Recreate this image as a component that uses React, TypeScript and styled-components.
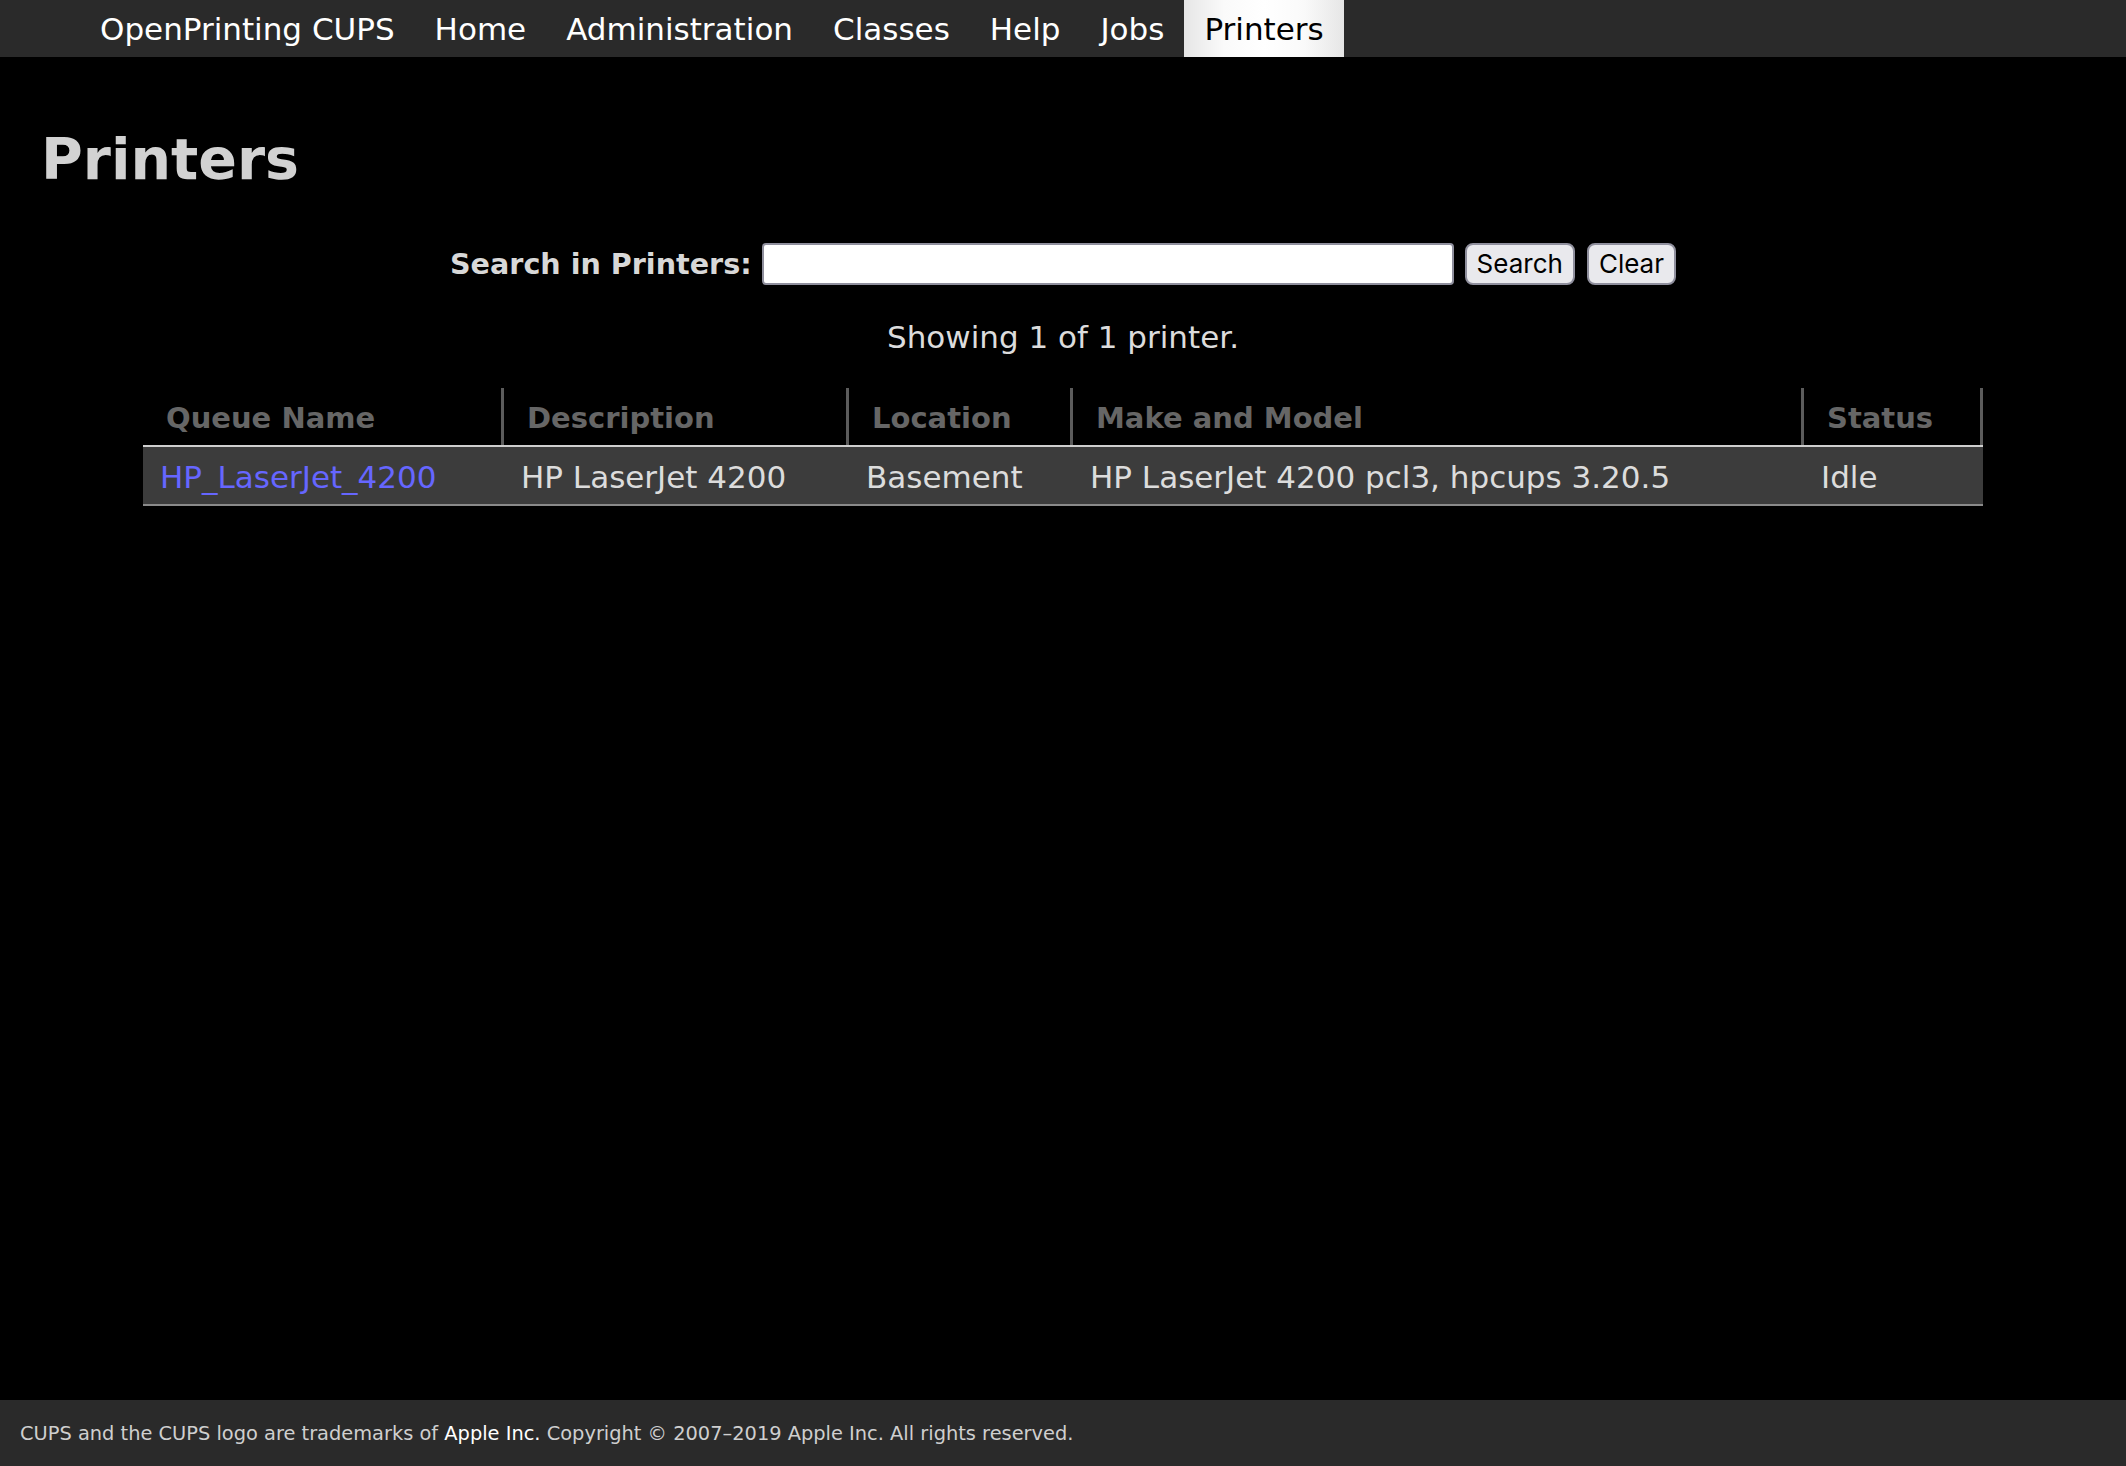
import React from "react";
import styled, { createGlobalStyle } from "styled-components";

const GlobalStyle = createGlobalStyle`
  html, body {
    margin: 0;
    padding: 0;
    background: #000;
  }
  body {
    font-family: "DejaVu Sans", Verdana, sans-serif;
    color: #dcdcdc;
  }
  * { box-sizing: border-box; }
`;

const Page = styled.div`
  min-height: 100vh;
  display: flex;
  flex-direction: column;
  background: #000;
`;

const NavBar = styled.nav`
  height: 57px;
  background: #2a2a2a;
  display: flex;
  padding-left: 80px;
`;

const NavItem = styled.a<{ $active?: boolean }>`
  display: block;
  height: 57px;
  padding: 2px 20px 0;
  line-height: 55px;
  font-size: 31px;
  text-decoration: none;
  white-space: nowrap;
  color: ${(p) => (p.$active ? "#000" : "#fff")};
  background: ${(p) =>
    p.$active
      ? "linear-gradient(to right, #e6e6e6 0%, #fafafa 25%, #fff 50%, #fafafa 75%, #e6e6e6 100%)"
      : "transparent"};
`;

const Main = styled.main`
  flex: 1;
  padding: 0 41px;
  display: flex;
  flex-direction: column;
`;

const Title = styled.h1`
  margin: 69px 0 0;
  font-size: 57px;
  line-height: 67px;
  font-weight: bold;
  color: #d2d2d2;
`;

const SearchForm = styled.form`
  margin-top: 50px;
  display: flex;
  justify-content: center;
  align-items: center;
  height: 42px;
`;

const SearchLabel = styled.label`
  font-size: 28.6px;
  font-weight: bold;
  color: #d8d8d8;
  white-space: nowrap;
`;

const SearchInput = styled.input`
  width: 692px;
  height: 42px;
  margin-left: 10px;
  border: 2px solid #8f8f9d;
  border-radius: 4px;
  background: #fff;
  font-size: 26px;
  padding: 0 6px;
`;

const FormButton = styled.button<{ $gap: number }>`
  height: 42px;
  margin-left: ${(p) => p.$gap}px;
  padding: 0 10px;
  border: 2px solid #8f8f9d;
  border-radius: 8px;
  background: #e9e9ed;
  color: #000;
  font-family: Inter, "Liberation Sans", sans-serif;
  font-size: 26px;
  line-height: 1;
`;

const Summary = styled.p`
  margin: 34px 0 0;
  text-align: center;
  font-size: 31px;
  line-height: 36px;
  color: #dcdcdc;
`;

const Table = styled.div`
  margin: 33px auto 0;
  width: 1840px;
`;

const columns = "361px 345px 224px 731px 179px";

const HeaderRow = styled.div`
  display: grid;
  grid-template-columns: ${columns};
  border-bottom: 2px solid #cfcfcf;
`;

const HeaderCell = styled.div`
  height: 57px;
  padding: 13px 0 0 23px;
  border-right: 3px solid #5c5c5c;
  font-size: 29px;
  line-height: 34px;
  font-weight: bold;
  color: #666;
  white-space: nowrap;
`;

const DataRow = styled.div`
  display: grid;
  grid-template-columns: ${columns};
  background: #3c3c3c;
  border-bottom: 2px solid #8a8a8a;
`;

const DataCell = styled.div`
  height: 57px;
  padding: 12px 0 0 17px;
  font-size: 31px;
  line-height: 36px;
  color: #dcdcdc;
  white-space: nowrap;
`;

const QueueLink = styled.a`
  color: #6666ff;
  text-decoration: none;
`;

const Footer = styled.footer`
  height: 66px;
  background: #2a2a2a;
  padding: 22px 0 0 20px;
  font-size: 19.4px;
  line-height: 23px;
  color: #cfcfcf;
  white-space: nowrap;
`;

const FooterLink = styled.a`
  color: #fff;
  text-decoration: none;
`;

const navItems = [
  "OpenPrinting CUPS",
  "Home",
  "Administration",
  "Classes",
  "Help",
  "Jobs",
  "Printers",
];

const headers = ["Queue Name", "Description", "Location", "Make and Model", "Status"];

export default function App() {
  return (
    <>
      <GlobalStyle />
      <Page>
        <NavBar>
          {navItems.map((item) => (
            <NavItem key={item} href="#" $active={item === "Printers"}>
              {item}
            </NavItem>
          ))}
        </NavBar>
        <Main>
          <Title>Printers</Title>
          <SearchForm onSubmit={(e) => e.preventDefault()}>
            <SearchLabel htmlFor="q">Search in Printers:</SearchLabel>
            <SearchInput id="q" type="search" />
            <FormButton $gap={11} type="submit">Search</FormButton>
            <FormButton $gap={12} type="button">Clear</FormButton>
          </SearchForm>
          <Summary>Showing 1 of 1 printer.</Summary>
          <Table>
            <HeaderRow>
              {headers.map((h) => (
                <HeaderCell key={h}>{h}</HeaderCell>
              ))}
            </HeaderRow>
            <DataRow>
              <DataCell>
                <QueueLink href="#">HP_LaserJet_4200</QueueLink>
              </DataCell>
              <DataCell>HP LaserJet 4200</DataCell>
              <DataCell>Basement</DataCell>
              <DataCell>HP LaserJet 4200 pcl3, hpcups 3.20.5</DataCell>
              <DataCell>Idle</DataCell>
            </DataRow>
          </Table>
        </Main>
        <Footer>
          CUPS and the CUPS logo are trademarks of <FooterLink href="#">Apple Inc.</FooterLink> Copyright © 2007–2019 Apple Inc. All rights reserved.
        </Footer>
      </Page>
    </>
  );
}
